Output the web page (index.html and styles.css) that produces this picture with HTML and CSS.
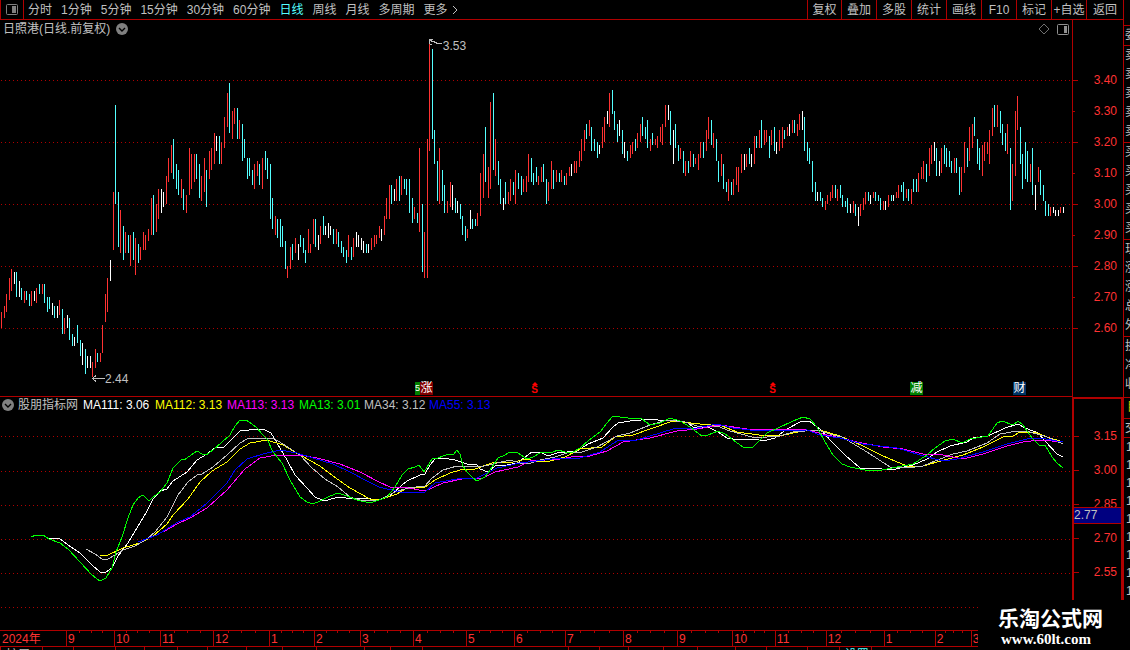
FILE: index.html
```
<!DOCTYPE html>
<html lang="zh-CN">

<head>
    <meta charset="UTF-8">
    <meta name="viewport" content="width=device-width, initial-scale=1.0">
    <title>日照港 日线</title>
    <link rel="stylesheet" href="styles.css">
</head>

<body>
    <div class="app">
        <!-- period tabs and tools -->
        <header class="toolbar">
            <button class="panel-btn" aria-label="侧栏">
                <svg width="12" height="11" viewBox="0 0 12 11"><rect x=".5" y=".5" width="11" height="10" rx="1" fill="none" stroke="#808080" /><rect x="6" y="2" width="4" height="7" fill="#808080" /></svg>
            </button>
            <nav class="periods">
                <button>分时</button>
                <button>1分钟</button>
                <button>5分钟</button>
                <button>15分钟</button>
                <button>30分钟</button>
                <button>60分钟</button>
                <button class="active">日线</button>
                <button>周线</button>
                <button>月线</button>
                <button>多周期</button>
                <button>更多<svg class="more" width="6" height="10" viewBox="0 0 6 10"><path d="M1 1l4 4-4 4" fill="none" stroke="#c0c0c0" /></svg></button>
            </nav>
            <div class="tools">
                <button>复权</button>
                <button>叠加</button>
                <button>多股</button>
                <button>统计</button>
                <button>画线</button>
                <button>F10</button>
                <button>标记</button>
                <button>+自选</button>
                <button>返回</button>
            </div>
        </header>

        <!-- price bars -->
        <section class="pane price-pane">
            <svg class="plot" id="price" viewBox="0 20 1072 376" preserveAspectRatio="none"></svg>
            <div class="pane-head">
                <span>日照港(日线.前复权)</span>
                <svg width="12" height="12" viewBox="0 0 12 12"><circle cx="6" cy="6" r="6" fill="#808080" /><path d="M3 5l3 3 3-3" fill="none" stroke="#000" stroke-width="1.4" /></svg>
                <span class="pane-icons">
                    <svg width="12" height="12" viewBox="0 0 12 12"><path d="M6 1l5 5-5 5-5-5z" fill="none" stroke="#707070" /></svg>
                    <svg width="12" height="11" viewBox="0 0 12 11"><rect x=".5" y=".5" width="11" height="10" rx="1" fill="none" stroke="#909090" /><rect x="7" y="2" width="3" height="7" fill="#909090" /></svg>
                </span>
            </div>
            <span class="mark high">3.53</span>
            <span class="mark low">2.44</span>
            <div id="events"></div>
        </section>
        <div class="scale price-scale">
            <span>3.40</span><span class="half">3.30</span><span>3.20</span><span class="half">3.10</span><span>3.00</span><span class="half">2.90</span><span>2.80</span><span class="half">2.70</span><span>2.60</span>
        </div>

        <!-- moving averages -->
        <section class="pane ma-pane">
            <svg class="plot" id="ma" viewBox="0 397 1072 233" preserveAspectRatio="none"></svg>
            <div class="pane-head legend">
                <svg width="12" height="12" viewBox="0 0 12 12"><circle cx="6" cy="6" r="6" fill="#808080" /><path d="M3 5l3 3 3-3" fill="none" stroke="#000" stroke-width="1.4" /></svg>
                <span class="name">股朋指标网</span>
                <span class="v ma111">MA111: 3.06</span>
                <span class="v ma112">MA112: 3.13</span>
                <span class="v ma113">MA113: 3.13</span>
                <span class="v short ma13">MA13: 3.01</span>
                <span class="v short ma34">MA34: 3.12</span>
                <span class="v short ma55">MA55: 3.13</span>
            </div>
        </section>
        <div class="scale ma-scale">
            <span>3.15</span><span>3.00</span><span>2.85</span><span>2.70</span><span>2.55</span>
            <div class="cursor-value">2.77</div>
        </div>

        <div class="timeline" id="timeline"></div>
        <div class="tabs" id="tabs"></div>

        <!-- quote panel, collapsed to its edge -->
        <aside class="quotes">
            <div class="group first"><span>委</span></div>
            <div class="group"><span>卖</span><span>卖</span><span>卖</span><span>卖</span><span>卖</span></div>
            <div class="group"><span>买</span><span>买</span><span>买</span><span>买</span><span>买</span></div>
            <div class="group"><span>现</span><span>涨</span><span>涨</span><span>总</span><span>外</span></div>
            <div class="group rest"><span>换</span><span>净</span><span>收</span></div>
            <div class="group title"><span>目</span></div>
            <div class="group"><span>交</span></div>
            <div class="group ticks"><span>1</span><span>1</span><span>1</span><span>1</span><span>1</span><span>1</span><span>1</span><span>1</span><span>1</span></div>
        </aside>

        <div class="brand">
            <strong>乐淘公式网</strong>
            <span>www.60lt.com</span>
        </div>
    </div>

    <script>
    // one entry per trading day: colour (r up, c down, w flat), x, high, low
    const bars = `
    r,1,312,328 r,4,306,318 r,6,294,312 r,9,278,300 r,11,269,291 w,14,272,284 c,16,272,297 w,19,281,297 c,21,288,300 r,24,291,303
    c,26,291,300 c,29,294,306 r,31,291,306 w,34,291,301 r,36,288,303 c,39,284,294 r,42,284,294 c,44,284,303 c,47,297,312 c,49,297,309
    w,52,303,315 c,54,306,318 w,57,306,318 r,59,300,315 c,62,309,334 r,64,318,334 w,67,315,328 c,69,318,340 c,72,334,346 w,74,337,346
    c,77,325,343 c,80,340,356 w,82,343,365 c,85,349,374 w,87,356,368 w,90,356,368 r,92,362,377 r,95,349,368 c,97,353,362 r,100,353,362
    r,102,325,353 r,105,294,322 r,107,278,312 w,110,260,281 r,113,192,250 c,115,105,204 c,118,192,247 r,120,210,253 c,123,226,260 r,125,232,253
    c,128,235,253 r,130,235,266 c,133,232,260 r,135,238,275 c,138,244,263 r,140,247,260 r,143,232,250 r,145,235,250 r,148,229,241 r,151,198,235
    c,153,195,235 r,156,204,232 r,158,189,219 w,161,189,213 w,163,192,207 r,166,176,204 r,168,158,182 r,171,145,173 c,173,139,179 c,176,164,189
    c,178,170,195 r,181,179,198 c,183,189,210 r,186,195,213 r,189,148,195 r,191,154,189 r,194,154,182 c,196,154,179 c,199,164,198 r,201,176,201
    r,204,158,192 c,206,170,207 r,209,151,179 r,211,148,170 r,214,133,164 w,216,136,151 c,219,136,164 r,221,142,164 r,224,117,148 r,227,93,127
    c,229,83,133 r,232,111,139 r,234,108,124 c,237,108,139 r,239,120,139 c,242,124,161 c,244,139,158 c,247,158,179 c,249,158,176 c,252,170,185
    r,254,164,189 r,257,161,176 c,259,164,185 r,262,158,189 c,265,151,170 c,267,158,179 c,270,164,219 c,272,198,229 r,275,216,235 c,277,219,238
    c,280,219,247 c,282,226,247 c,285,241,269 r,287,266,278 r,290,247,269 c,292,244,260 r,295,238,253 w,298,244,260 c,300,235,247 c,303,238,253
    c,305,250,263 r,308,229,253 r,310,244,253 r,313,219,244 c,315,219,247 w,318,235,250 r,320,226,244 c,323,216,235 w,325,226,235 w,328,223,238
    w,330,226,235 c,333,229,244 r,336,229,244 c,338,232,247 c,341,241,253 c,343,247,257 c,346,250,263 r,348,235,257 c,351,247,260 r,353,238,257
    w,356,232,247 w,358,235,247 w,361,238,250 w,363,241,253 c,366,244,253 w,368,244,253 r,371,238,250 r,374,235,247 r,376,235,244 r,379,226,238
    w,381,229,241 r,384,216,235 r,386,198,219 r,389,185,219 c,391,185,204 w,394,189,201 r,396,179,201 c,399,176,201 r,401,176,195 c,404,179,189
    c,406,179,195 c,409,179,213 c,412,198,223 r,414,207,219 c,417,213,223 r,419,148,232 c,422,204,272 r,424,232,278 r,427,139,278 r,429,43,151
    c,432,49,139 c,434,130,164 c,437,161,201 r,439,148,204 c,442,170,201 c,444,185,213 r,447,201,213 r,450,182,207 w,452,185,210 c,455,198,213
    w,457,201,213 c,460,204,219 c,462,216,235 c,465,226,241 r,467,229,238 w,470,210,229 c,472,219,229 c,475,219,226 r,477,213,226 r,480,173,216
    r,483,154,198 c,485,127,182 r,488,167,198 r,490,102,189 c,493,93,170 r,495,139,176 c,498,161,185 c,500,179,204 w,503,198,210 c,505,182,204
    r,508,192,204 r,510,179,201 c,513,182,195 r,515,170,204 c,518,173,189 c,521,176,195 r,523,179,192 r,526,176,192 r,528,154,182 c,531,158,182
    c,533,173,185 c,536,167,182 r,538,176,185 r,541,167,182 c,543,164,182 c,546,179,204 r,548,182,201 r,551,161,189 c,553,170,189 r,556,170,182
    c,559,173,182 r,561,170,182 c,564,176,185 r,566,173,185 r,569,167,176 w,571,164,176 r,574,161,173 r,576,161,173 r,579,151,167 r,581,139,161
    r,584,130,151 c,586,124,139 r,589,120,136 c,591,127,151 c,594,139,151 c,597,142,158 w,599,145,154 r,602,127,148 r,604,117,142 w,607,111,124
    r,609,93,127 c,612,90,114 c,614,111,130 c,617,124,142 w,619,120,136 c,622,130,154 w,624,142,158 c,627,151,161 r,630,145,158 r,632,142,154
    c,635,139,151 r,637,133,148 r,640,124,142 c,642,117,136 c,645,127,139 c,647,120,148 r,650,139,151 c,652,133,145 r,655,139,145 r,657,136,148
    r,660,127,142 r,662,124,145 r,665,105,127 w,668,105,120 c,670,111,145 w,673,130,164 c,675,124,148 c,678,145,161 r,680,148,159 c,683,151,173
    r,685,161,176 c,688,161,173 r,690,151,167 c,693,154,167 r,695,158,164 r,698,154,170 r,700,142,158 c,703,142,158 r,706,130,151 r,708,117,139
    c,711,120,145 r,713,133,148 c,716,139,161 c,718,161,182 r,721,154,176 c,723,164,189 c,726,182,192 r,728,179,201 c,731,182,195 r,733,179,195
    r,736,167,185 r,738,167,192 r,741,154,173 w,744,154,170 r,746,154,167 c,749,148,164 w,751,154,167 r,754,136,164 c,756,136,148 r,759,130,148
    c,761,120,148 r,764,130,145 r,766,130,142 c,769,136,158 r,771,130,145 c,774,127,151 w,776,142,154 r,779,130,151 r,782,127,148 c,784,130,139
    r,787,127,136 w,789,124,136 r,792,120,133 c,794,120,133 r,797,124,136 r,799,114,130 w,802,111,130 c,804,117,151 c,807,142,161 c,809,148,164
    c,812,161,192 c,815,182,201 w,817,192,201 c,820,192,201 c,822,198,207 r,825,201,210 r,827,195,204 r,830,192,201 r,832,185,198 c,835,185,198
    r,837,189,201 c,840,185,198 c,842,195,207 c,845,201,207 c,847,198,213 w,850,204,213 r,853,201,213 c,855,204,216 w,858,207,226 r,860,204,216
    r,863,198,210 r,865,192,204 c,868,192,201 w,870,195,204 r,873,192,198 c,875,192,201 c,878,195,201 c,880,198,210 r,883,201,210 w,885,201,210
    r,888,195,207 c,891,195,201 w,893,195,201 r,896,192,198 r,898,185,198 c,901,185,192 c,903,182,201 r,906,189,198 c,908,189,201 r,911,189,204
    c,913,179,192 c,916,179,192 r,918,173,192 r,921,167,179 r,923,161,179 c,926,164,182 r,929,148,176 r,931,145,164 w,934,142,161 c,936,148,176
    w,939,161,176 r,941,148,173 c,944,145,164 c,946,148,167 c,949,151,167 c,951,161,173 r,954,158,173 c,956,158,173 c,959,167,195 r,961,167,192
    r,964,142,173 c,967,148,167 r,969,127,161 r,972,124,148 c,974,117,136 c,977,139,164 c,979,148,170 r,982,145,176 r,984,142,161 r,987,142,154
    r,989,130,164 r,992,108,136 c,994,105,127 r,997,105,127 c,1000,111,133 c,1002,124,145 c,1005,133,151 r,1007,124,154 c,1010,148,210 r,1012,164,201
    r,1015,111,176 r,1017,96,130 c,1020,127,164 c,1022,154,189 c,1025,142,179 c,1027,151,182 r,1030,164,182 c,1032,148,195 w,1035,185,210 r,1038,167,182
    c,1040,170,195 c,1043,185,201 c,1045,201,216 c,1048,204,216 r,1050,207,216 w,1053,207,213 w,1055,210,216 w,1058,210,216 r,1060,207,213 w,1063,207,213`;

    const averages = [
        ['#ffffff', '49,538 59,538 68,545 80,553 92,565 100,572 106,572 112,568 118,556 128,543 140,523 147,511 153,499 160,491 167,489 173,481 187,472 197,460 207,454 215,448 224,447 230,441 240,431 258,429 265,430 271,433 277,443 287,460 295,475 307,488 315,497 322,500 328,500 338,497 353,499 363,498 379,500 390,496 402,485 407,481 420,475 425,474 430,465 435,459 443,458 455,460 467,464 476,464 480,469 488,472 495,466 507,465 518,463 525,457 532,452 540,452 548,456 557,453 577,451 588,444 603,438 613,427 618,423 630,421 653,419 663,421 675,420 688,423 693,427 710,428 718,432 727,438 733,439 759,440 767,440 775,438 787,429 802,421 809,421 820,429 833,443 845,455 860,468 882,469 892,470 913,465 927,459 937,452 950,446 967,442 973,438 988,436 1005,428 1018,424 1025,428 1038,433 1045,441 1057,454 1063,457'],
        ['#ffff00', '100,556 108,555 123,548 140,543 153,536 167,524 173,515 188,499 200,482 212,471 227,462 240,449 250,443 267,440 283,445 300,455 320,466 333,476 350,488 370,499 379,500 397,494 405,489 425,487 435,480 450,473 460,470 475,469 492,463 513,462 527,459 535,461 550,461 565,457 580,449 602,447 615,437 633,435 653,428 673,421 700,424 722,426 737,432 759,435 780,436 802,431 820,430 840,436 863,446 883,456 907,466 923,466 937,462 963,455 983,447 1003,437 1013,436 1020,432 1037,433 1050,438 1063,442'],
        ['#ff00ff', '163,532 177,524 190,518 207,508 227,490 245,469 260,458 277,455 300,455 317,458 340,464 360,472 379,482 390,487 408,488 425,491 443,483 462,479 483,478 495,472 518,467 530,461 560,459 577,456 590,456 607,451 623,442 650,438 677,431 697,429 720,425 747,429 760,429 803,429 823,434 857,442 883,447 903,449 923,454 943,455 963,459 983,454 1007,446 1023,442 1040,440 1063,442'],
        ['#00ff00', '31,537 36,535 43,535 49,539 60,543 68,549 80,562 92,575 100,581 106,578 112,568 116,552 122,537 128,518 133,505 138,498 143,495 149,501 153,497 160,492 167,483 173,468 182,459 184,460 197,451 202,454 206,455 213,450 222,442 230,435 235,426 240,420 246,420 252,424 257,428 262,434 267,439 273,452 282,463 290,480 300,497 307,502 313,504 320,501 330,496 338,493 347,496 357,500 370,503 379,500 387,497 395,487 402,475 408,469 415,467 419,465 424,472 432,459 438,458 443,456 449,454 453,455 457,450 460,454 463,466 467,472 473,478 477,481 485,477 490,470 498,458 505,455 510,452 518,453 527,459 533,457 542,452 553,452 558,450 565,452 573,452 580,448 588,441 600,432 607,423 613,416 620,417 628,418 633,418 642,419 650,425 660,423 670,418 680,421 690,427 702,436 708,435 718,431 725,434 733,440 743,447 753,447 759,441 767,433 778,428 793,421 803,417 810,419 817,427 825,442 833,455 842,464 850,467 865,470 882,470 897,467 913,464 927,455 935,448 945,441 953,439 962,443 970,439 988,436 997,423 1002,421 1013,425 1018,421 1023,425 1032,438 1040,446 1045,445 1052,457 1057,463 1063,468'],
        ['#c0c0c0', '86,549 95,554 102,559 108,559 115,555 123,550 135,546 147,539 155,532 167,517 178,495 188,482 197,475 202,474 213,467 227,455 240,443 249,438 257,439 273,438 283,444 300,455 312,468 325,479 338,487 350,497 360,500 368,501 379,500 395,492 408,488 425,486 432,478 443,470 457,466 480,467 493,464 510,460 520,463 528,464 540,460 555,457 567,453 582,452 597,447 617,436 630,433 650,425 667,420 685,422 700,427 717,426 730,431 752,437 767,437 780,436 793,432 818,430 833,435 842,437 867,452 890,467 907,468 923,466 935,461 953,454 967,451 987,443 1000,434 1017,431 1030,432 1047,437 1063,444'],
        ['#0000ff', '138,542 157,535 178,522 190,517 207,503 227,483 235,470 247,459 263,454 280,450 297,453 313,458 333,464 350,472 367,481 379,487 400,492 425,492 435,483 457,479 477,478 497,468 520,463 560,458 580,458 600,452 617,441 637,440 673,429 697,428 717,424 733,428 759,431 807,430 820,435 840,438 863,444 897,448 920,455 943,461 957,459 983,452 1007,444 1027,439 1040,438 1063,442']
    ];

    // label and left edge of every month
    const months = [['2024年', 0], ['9', 66], ['10', 114], ['11', 160], ['12', 213], ['1', 269], ['2', 314], ['3', 360], ['4', 413], ['5', 466], ['6', 514], ['7', 565], ['8', 623], ['9', 677], ['10', 732], ['11', 775], ['12', 826], ['1', 884], ['2', 935], ['3', 971]];
    const tabEdges = [0, 42, 73, 115, 144, 177, 207, 246, 282, 316, 364, 390, 422, 568, 599, 628, 663, 697, 735, 766, 807, 839, 871];
    const events = [['5', 415, 'green narrow'], ['涨', 420, 'red'], ['S', 530, 'dividend'], ['S', 768, 'dividend'], ['减', 910, 'green'], ['财', 1013, 'navy']];
    const plotWidth = 1072;
    const colors = { r: '#ff3232', c: '#54ffff', w: '#ffffff' };

    const percent = x => (x / plotWidth * 100).toFixed(3) + '%';
    const gridLine = y => `<path class="grid" d="M1 ${y + 0.5}H1071"/>`;

    // price pane
    let out = [80, 142, 204, 266, 328].map(gridLine).join('');
    bars.trim().split(/\s+/).forEach(item => {
        const [kind, x, high, low] = item.split(',');
        out += `<rect x="${x}" y="${high}" width="1" height="${low - high}" fill="${colors[kind]}"/>`;
    });
    out += '<path class="arrow" d="M429.5 40.5l4 1l4 2h4M433 39.5h-3.500v4l2 1.500M92.500 378.500h12M96 375.500l-3.500 3l3.500 3"/>';
    document.querySelector('#price').innerHTML = out;

    // average lines
    const order = [0, 1, 4, 2, 5, 3];
    document.querySelector('#ma').innerHTML = [436, 471, 505, 539, 573, 607].map(gridLine).join('')
        + order.map(i => `<polyline class="average" points="${averages[i][1]}" stroke="${averages[i][0]}"/>`).join('');

    document.querySelector('#events').innerHTML = events.map(([text, x, kind]) =>
        `<span class="event ${kind}" style="left:${percent(x)}">${text}</span>`).join('');

    document.querySelector('#timeline').innerHTML = months.map(([label, x], i) => {
        const end = i + 1 < months.length ? months[i + 1][1] : plotWidth;
        const minor = i && i + 1 < months.length ? '<i></i><i></i><i></i>' : '';
        return `<div class="month" style="width:${percent(end - x)}"><div class="minor">${minor}</div>${label}</div>`;
    }).join('');

    document.querySelector('#tabs').innerHTML = tabEdges.map((x, i) => {
        const end = i + 1 < tabEdges.length ? tabEdges[i + 1] : plotWidth;
        const text = i === 0 ? '扩展' : x === 839 ? '设置' : '';
        return `<span class="${x === 839 ? 'active' : ''}" style="width:${percent(end - x)}">${text}</span>`;
    }).join('');
    </script>
</body>

</html>
```
FILE: styles.css
```
* {
    box-sizing: border-box;
}

body {
    margin: 0;
    background-color: #000;
    color: #c0c0c0;
    font-family: "Liberation Sans", "Noto Sans CJK SC", sans-serif;
    font-size: 12px;
    line-height: 16px;
    overflow: hidden;
}

button {
    padding: 0;
    border: 0;
    background: none;
    color: inherit;
    font: inherit;
    white-space: nowrap;
    cursor: pointer;
}

.app {
    position: relative;
    display: grid;
    grid-template-columns: minmax(0, 1fr) 51px 7px;
    grid-template-rows: 20px minmax(0, 377fr) minmax(0, 233fr) 17px 3px;
    height: 100vh;
}

/* toolbar */
.toolbar {
    grid-column: 1 / 3;
    display: flex;
    border-bottom: 1px solid #b00000;
}

.panel-btn {
    display: flex;
    align-items: center;
    justify-content: center;
    width: 24px;
    border: solid #b00000;
    border-width: 0 1px;
}

.periods {
    display: flex;
    gap: 9px;
    padding-left: 4px;
}

.periods .active {
    color: #54ffff;
}

.more {
    margin-left: 4px;
    vertical-align: -1px;
}

.tools {
    display: flex;
    margin-left: auto;
}

.tools button {
    width: 35px;
    border-left: 1px solid #b00000;
}

.tools button:last-child {
    width: 37px;
}

.tools button:first-child {
    width: 34px;
}

/* chart panes */
.pane {
    position: relative;
    grid-column: 1;
    min-height: 0;
}

.price-pane {
    border-bottom: 1px solid #b00000;
}

.plot {
    display: block;
    width: 100%;
    height: 100%;
    shape-rendering: crispEdges;
}

.grid {
    stroke: #b00000;
    stroke-dasharray: 1 3;
}

.average,
.arrow {
    fill: none;
}

.arrow {
    stroke: #c0c0c0;
}

.pane-head {
    position: absolute;
    top: 1px;
    left: 0;
    right: 0;
    display: flex;
    align-items: center;
    gap: 6px;
    padding: 0 3px;
}

.pane-icons {
    display: flex;
    align-items: center;
    gap: 7px;
    margin-left: auto;
}

.mark {
    position: absolute;
}

.high {
    top: 18px;
    left: 41.3%;
}

.low {
    bottom: 9px;
    left: 9.8%;
}

.event {
    position: absolute;
    bottom: 1px;
    width: 13px;
    height: 13px;
    color: #fff;
    line-height: 13px;
    text-align: center;
}

.green {
    background-color: #008000;
}

.red {
    background-color: #800000;
}

.navy {
    background-color: #003366;
}

.narrow {
    width: 5px;
    font-size: 9px;
}

/* S with a small arrow head on top */
.dividend {
    width: 9px;
    padding-top: 3px;
    color: #ff0000;
    font-size: 10px;
    font-weight: bold;
    line-height: 10px;
}

.dividend::before {
    content: "";
    position: absolute;
    top: 0;
    left: 2px;
    border: solid transparent;
    border-width: 0 3px 3px;
    border-bottom-color: #ff0000;
}

.legend {
    top: 0;
    padding: 0 2px;
    gap: 4px;
}

.legend .name {
    width: 61px;
}

.v {
    width: 68px;
    white-space: nowrap;
}

.v.short {
    width: 61px;
}

.ma111 {
    color: #fff;
}

.ma112 {
    color: #ff0;
}

.ma113 {
    color: #f0f;
}

.ma13 {
    color: #0f0;
}

.ma34 {
    color: #c0c0c0;
}

.ma55 {
    color: #00f;
}

/* value scales */
.scale {
    position: relative;
    grid-column: 2;
    min-height: 0;
    color: #ff3232;
    text-align: right;
    border-left: 1px solid #b00000;
    overflow: hidden;
}

.scale span {
    display: block;
    padding-right: 6px;
    background: linear-gradient(#b00000, #b00000) left center / 5px 1px no-repeat;
}

.scale .half {
    background-size: 2px 1px;
}

.price-scale {
    padding-top: 45px;
}

.price-scale span {
    line-height: 31px;
}

.ma-scale {
    padding-top: 20px;
    border: 2px solid #b00000;
    border-bottom: 0;
}

.ma-scale span {
    padding-right: 4px;
    line-height: 34px;
}

.cursor-value {
    position: absolute;
    top: 108px;
    left: 0;
    right: 0;
    height: 17px;
    border: solid #b00000;
    border-width: 1px 0;
    background-color: #000080;
    color: #c0c0c0;
    line-height: 15px;
    text-align: left;
}

/* time axis */
.timeline {
    grid-column: 1;
    display: flex;
    border: solid #b00000;
    border-width: 1px 0;
    color: #ff3232;
    line-height: 13px;
}

.month {
    padding-left: 1px;
    border-left: 1px solid #b00000;
    white-space: nowrap;
}

.month:first-child {
    padding-left: 2px;
    border-left: 0;
}

.minor {
    display: flex;
    justify-content: space-evenly;
    height: 2px;
}

.minor i {
    width: 1px;
    background-color: #b00000;
}

.tabs {
    grid-column: 1;
    display: flex;
    min-height: 0;
    overflow: hidden;
}

.tabs span {
    padding-left: 5px;
    border-left: 1px solid #b00000;
}

.tabs .active {
    color: #54ffff;
}

/* quote panel edge */
.quotes {
    grid-column: 3;
    grid-row: 1 / -1;
    padding-top: 25px;
    border-left: 1px solid #b00000;
    overflow: hidden;
}

.group {
    height: 97px;
    padding-left: 1px;
    border-top: 1px solid #b00000;
}

.group span {
    display: block;
    width: 14px;
    line-height: 19px;
}

.group.first {
    height: 20px;
}

.group.rest {
    height: 61px;
}

.group.title {
    height: 21px;
    padding-left: 3px;
    color: #c0c000;
}

.group.title + .group {
    height: 19px;
}

.group.ticks {
    height: auto;
    padding-left: 2px;
}

.group.ticks span {
    line-height: 18px;
}

.brand {
    position: absolute;
    right: 0;
    bottom: 0;
    display: flex;
    flex-direction: column;
    width: 152px;
    height: 50px;
    padding: 8px 0 0 20px;
    background-color: #000;
    color: #fff;
}

.brand strong {
    font-size: 21px;
    line-height: 22px;
}

.brand span {
    padding-left: 3px;
    font-family: "Liberation Serif", serif;
    font-size: 15px;
    font-weight: bold;
    line-height: 18px;
}
```
